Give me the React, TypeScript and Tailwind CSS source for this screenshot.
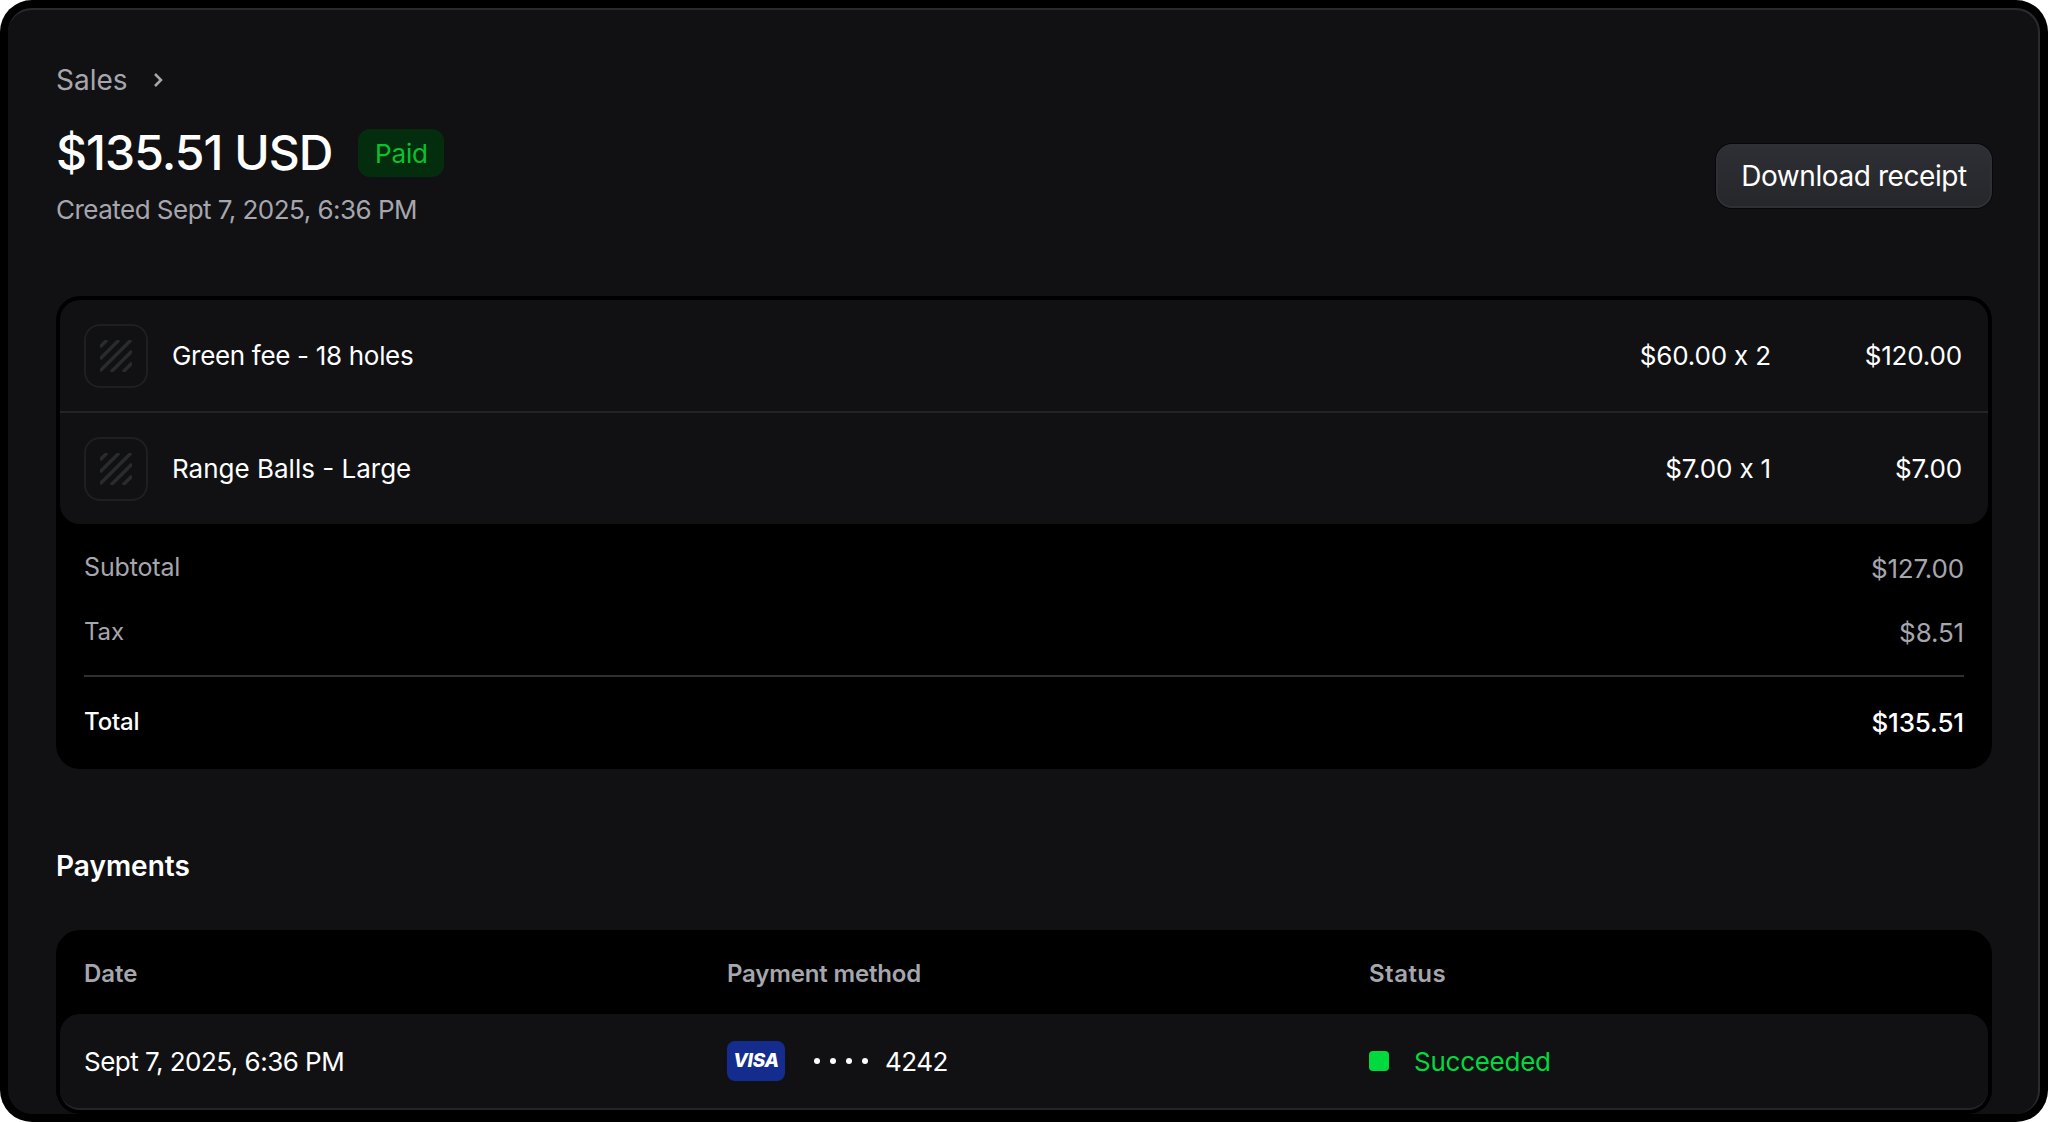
import React from "react";

function Hatch() {
  return (
    <div className="flex h-16 w-16 shrink-0 items-center justify-center rounded-2xl border-2 border-[#1e1f22]">
      <svg width="32" height="32" viewBox="0 0 32 32" fill="none">
        <g stroke="#2a2b2f" strokeWidth="3.4">
          <path d="M0 7 L7 0" />
          <path d="M0 19 L19 0" />
          <path d="M0 31 L31 0" />
          <path d="M11 32 L32 11" />
          <path d="M23 32 L32 23" />
        </g>
      </svg>
    </div>
  );
}

function Item({
  name,
  nameClass,
  price,
  total,
  last,
}: {
  name: string;
  nameClass: string;
  price: string;
  total: string;
  last?: boolean;
}) {
  return (
    <div className={`flex items-center pl-6 pr-[26px] ${last ? "h-[111px]" : "h-[113px] border-b-2 border-[#232428]"}`}>
      <Hatch />
      <span className={`ml-6 flex-1 text-[26px] font-normal text-white ${nameClass}`}>{name}</span>
      <span className="text-right text-[26px] text-white">{price}</span>
      <span className="w-[191px] text-right text-[26px] text-white">{total}</span>
    </div>
  );
}

export default function App() {
  return (
    <div className="h-[1122px] w-[2048px] overflow-hidden bg-white font-['Inter',sans-serif] tracking-[-0.01em]">
      <div className="h-full rounded-[32px] bg-black p-2">
        <div className="h-full overflow-hidden rounded-[24px] border-t-2 border-r-2 border-[#2a2b2f] bg-[#111113] pl-12 pr-[46px] pt-[46px]">
          <div className="flex h-[48px] items-center text-[28px] tracking-normal text-[#a6a6ae]">
            <span>Sales</span>
            <svg className="ml-[24px]" width="12" height="18" viewBox="0 0 12 18" fill="none">
              <path d="M3 3 L9 9 L3 15" stroke="#a6a6ae" strokeWidth="2.5" />
            </svg>
          </div>

          <div className="mt-[21px] flex items-center justify-between">
            <div>
              <div className="flex items-center">
                <h1 className="text-[48px] font-[450] leading-[56px] tracking-[-0.02em] text-white">$135.51 USD</h1>
                <span className="ml-[26px] flex h-12 w-[86px] items-center justify-center rounded-xl bg-[#032d0d] text-[26px] text-[#08c22f]">
                  Paid
                </span>
              </div>
              <p className="mt-[13px] text-[26px] leading-8 tracking-[-0.02em] text-[#a6a6ae]">
                Created Sept 7, 2025, 6:36 PM
              </p>
            </div>
            <button className="flex h-16 w-[276px] items-center justify-center rounded-2xl border-2 border-[#2f3035] bg-linear-to-b from-[#2e2f34] to-[#26272b] text-[28px] font-normal tracking-[-0.015em] text-white shadow-[0_0_0_1px_#08080a]">
              Download receipt
            </button>
          </div>

          <div className="mt-[70px] h-[473px] rounded-[24px] bg-black p-1">
            <div className="rounded-[20px] bg-[#111113]">
              <Item name="Green fee - 18 holes" nameClass="tracking-[-0.012em]" price="$60.00 x 2" total="$120.00" />
              <Item name="Range Balls - Large" nameClass="tracking-normal" price="$7.00 x 1" total="$7.00" last />
            </div>
            <div className="px-6 pt-[28px]">
              <div className="flex h-8 items-center justify-between text-[25px] text-[#a6a6ae]">
                <span>Subtotal</span>
                <span className="text-[26px]">$127.00</span>
              </div>
              <div className="mt-8 flex h-8 items-center justify-between text-[24px] text-[#a6a6ae]">
                <span>Tax</span>
                <span className="text-[26px]">$8.51</span>
              </div>
              <div className="mt-[27px] border-t-2 border-[#2f3034]" />
              <div className="mt-[29px] flex h-8 items-center justify-between text-[24px] font-medium text-white">
                <span>Total</span>
                <span className="text-[26px]">$135.51</span>
              </div>
            </div>
          </div>

          <h2 className="mt-[81px] text-[28px] font-semibold leading-8 tracking-normal text-white">Payments</h2>

          <div className="mt-[48px] rounded-[24px] bg-black p-1">
            <div className="grid h-[80px] grid-cols-[643px_642px_1fr] items-center px-6 text-[24px] font-semibold text-[#a6a6ae]">
              <span className="tracking-normal">Date</span>
              <span>Payment method</span>
              <span className="tracking-[0.02em]">Status</span>
            </div>
            <div className="grid h-[96px] grid-cols-[643px_642px_1fr] items-center rounded-[20px] border-b-2 border-[#232428] bg-[#111113] px-6 text-[26px] tracking-[-0.02em] text-white">
              <span>Sept 7, 2025, 6:36 PM</span>
              <div className="flex items-center">
                <span className="flex h-10 w-[58px] items-center justify-center rounded-lg bg-[#142c8e] text-[19px] font-extrabold italic tracking-[-0.02em] text-white">
                  VISA
                </span>
                <span className="ml-[29px] flex w-[54px] gap-[10px]">
                  <i className="h-[6px] w-[6px] rounded-full bg-white" />
                  <i className="h-[6px] w-[6px] rounded-full bg-white" />
                  <i className="h-[6px] w-[6px] rounded-full bg-white" />
                  <i className="h-[6px] w-[6px] rounded-full bg-white" />
                </span>
                <span className="ml-[17px]">4242</span>
              </div>
              <div className="flex items-center text-[#00da3e]">
                <i className="h-5 w-5 rounded bg-[#00da3e]" />
                <span className="ml-[25px] tracking-[-0.01em]">Succeeded</span>
              </div>
            </div>
          </div>
        </div>
      </div>
    </div>
  );
}
